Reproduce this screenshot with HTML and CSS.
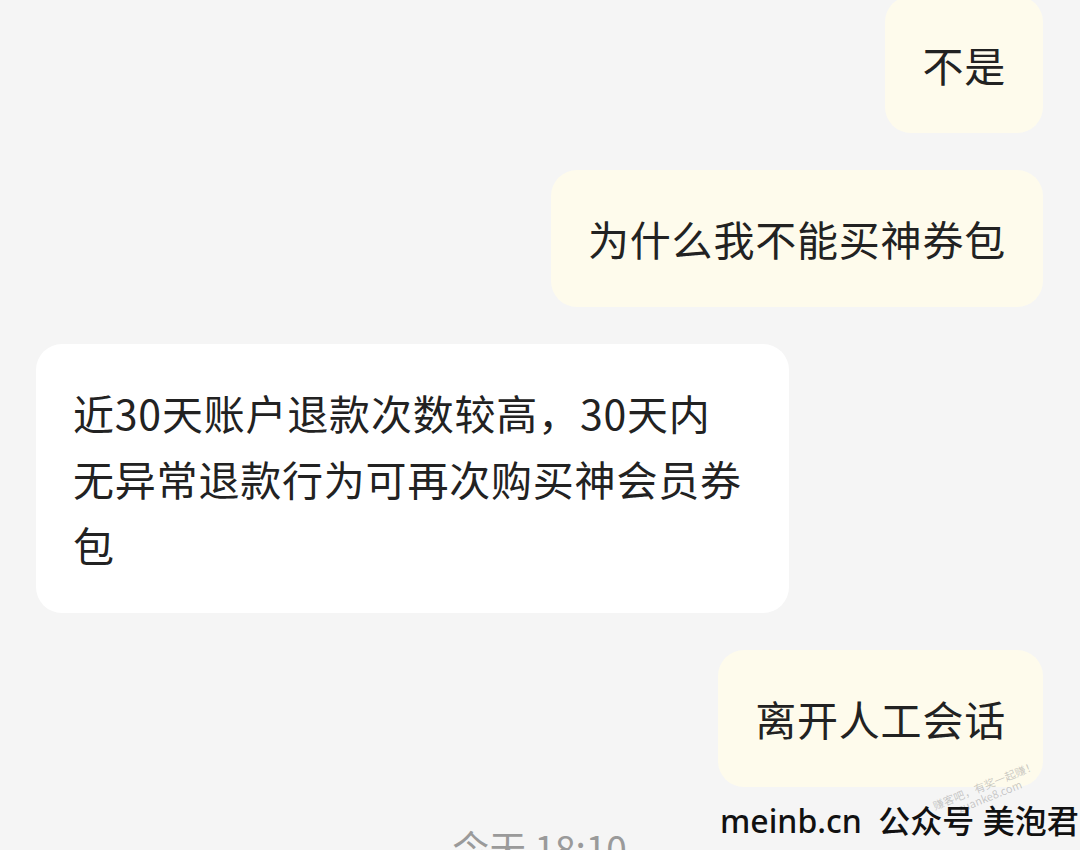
FILE: index.html
```html
<!DOCTYPE html>
<html lang="zh-CN">
<head>
    <meta charset="UTF-8">
    <meta name="viewport" content="width=device-width, initial-scale=1.0">
    <title>客服会话</title>
    <link rel="stylesheet" href="styles.css">
</head>
<body>
    <div class="chat">
        <div class="row right">
            <div class="bubble mine">不是</div>
        </div>
        <div class="row right">
            <div class="bubble mine">为什么我不能买神券包</div>
        </div>
        <div class="row left">
            <div class="bubble other">近30天账户退款次数较高，30天内无异常退款行为可再次购买神会员券包</div>
        </div>
        <div class="row right">
            <div class="bubble mine">离开人工会话</div>
        </div>
        <div class="time">今天 18:10</div>
    </div>

    <!-- 水印 -->
    <div class="mark-faint">
        <div>赚客吧，有奖一起赚！</div>
        <div class="mark-faint-url">zuanke8.com</div>
    </div>
    <div class="mark">meinb.cn&nbsp;&nbsp;公众号 美泡君</div>
</body>
</html>
```

FILE: styles.css
```css
body {
    margin: 0;
    padding: 0;
    width: 1080px;
    height: 850px;
    overflow: hidden;
    background-color: #f5f5f5;
    font-family: "Noto Sans CJK SC", "Noto Sans", sans-serif;
    color: #222222;
}

.chat {
    display: flex;
    flex-direction: column;
    gap: 37px;
    padding: 0 37px 0 36px;
    margin-top: -4px;
}

.row {
    display: flex;
}

.row.right {
    justify-content: flex-end;
}

.row.left {
    justify-content: flex-start;
}

.bubble {
    box-sizing: border-box;
    max-width: 753px;
    padding: 35px 37px 36px 37px;
    border-radius: 26px;
    font-size: 41px;
    line-height: 66px;
    letter-spacing: 0.8px;
}

.bubble.mine {
    background-color: #fefbec;
}

.bubble.other {
    background-color: #ffffff;
    padding-right: 40px;
}

.time {
    text-align: center;
    color: #9a9a9a;
    font-size: 37px;
    line-height: 50px;
    margin-top: -2px;
}

/* 水印 */
.mark {
    position: absolute;
    left: 720px;
    top: 796px;
    white-space: nowrap;
    font-family: "Noto Sans", "Noto Sans CJK SC", sans-serif;
    font-size: 32px;
    font-weight: 500;
    color: #111111;
}

.mark-faint {
    position: absolute;
    left: 931px;
    top: 800px;
    white-space: nowrap;
    font-size: 11px;
    line-height: 12px;
    color: rgba(140, 140, 140, 0.45);
    transform: rotate(-22deg);
    transform-origin: left top;
}

.mark-faint-url {
    padding-left: 22px;
}
```
